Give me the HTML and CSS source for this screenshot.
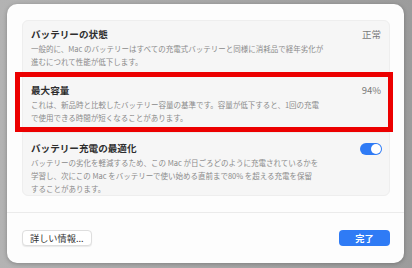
FILE: index.html
```html
<!DOCTYPE html>
<html lang="ja">
<head>
    <meta charset="UTF-8">
    <meta name="viewport" content="width=device-width, initial-scale=1.0">
    <title>バッテリー</title>
    <link rel="stylesheet" href="styles.css">
</head>
<body>
    <div class="backdrop">
        <div class="dialog">
            <div class="content">
                <div class="group">
                    <div class="row">
                        <div class="text">
                            <div class="title">バッテリーの状態</div>
                            <div class="desc">一般的に、Mac のバッテリーはすべての充電式バッテリーと同様に消耗品で経年劣化が<br>進むにつれて性能が低下します。</div>
                        </div>
                        <div class="value">正常</div>
                    </div>
                    <div class="row">
                        <div class="text">
                            <div class="title">最大容量</div>
                            <div class="desc">これは、新品時と比較したバッテリー容量の基準です。容量が低下すると、1回の充電<br>で使用できる時間が短くなることがあります。</div>
                        </div>
                        <div class="value">94%</div>
                    </div>
                    <div class="row row-last">
                        <div class="text">
                            <div class="title">バッテリー充電の最適化</div>
                            <div class="desc">バッテリーの劣化を軽減するため、この Mac が日ごろどのように充電されているかを<br>学習し、次にこの Mac をバッテリーで使い始める直前まで80% を超える充電を保留<br>することがあります。</div>
                        </div>
                        <div class="toggle"><span class="knob"></span></div>
                    </div>
                    <!-- annotation frame drawn over the second row -->
                    <div class="highlight"></div>
                </div>
            </div>
            <div class="footer">
                <button class="btn btn-plain">詳しい情報...</button>
                <button class="btn btn-primary">完了</button>
            </div>
        </div>
    </div>
</body>
</html>
```
FILE: styles.css
```css
body {
    margin: 0;
    padding: 0;
    font-family: "Noto Sans CJK JP", "Noto Sans", sans-serif;
    background: #a9a9a9;
}
.backdrop {
    width: 412px;
    height: 268px;
    padding: 4px 8px 5px 7px;
    box-sizing: border-box;
    background: linear-gradient(90deg, #b3b3b3 0%, #a6a6a6 60%, #9c9c9c 100%);
}
.dialog {
    width: 397px;
    height: 259px;
    background: #fdfdfd;
    border-radius: 10px;
    box-shadow: 0 1px 4px rgba(0, 0, 0, 0.25);
    display: flex;
    flex-direction: column;
}
.content {
    padding: 16px 14px 16px 15px;
    border-bottom: 1px solid #ebebeb;
}
.group {
    position: relative;
    background: #f6f6f6;
    border: 1px solid #eeeeee;
    border-radius: 6px;
}
.row {
    display: flex;
    align-items: flex-start;
    justify-content: space-between;
    padding: 6px 8px 8px 8px;
    border-bottom: 1px solid #ececec;
}
.row-last {
    border-bottom: none;
    padding-top: 8px;
    padding-bottom: 0;
}
.text {
    flex: 1;
    white-space: nowrap;
}
.title {
    font-size: 9.6px;
    line-height: 14px;
    font-weight: 600;
    color: #2e2e2e;
}
.desc {
    font-size: 7.5px;
    line-height: 13px;
    color: #8b8b8b;
    margin-top: 1px;
}
.value {
    font-size: 9.5px;
    line-height: 14px;
    color: #7a7a7a;
}
.toggle {
    width: 22px;
    height: 12px;
    margin-top: 2px;
    margin-right: -1px;
    border-radius: 6px;
    background: #2f7bf5;
    display: flex;
    justify-content: flex-end;
    align-items: center;
    padding: 1px;
    box-sizing: border-box;
}
.knob {
    width: 10px;
    height: 10px;
    border-radius: 50%;
    background: white;
}
.highlight {
    position: absolute;
    left: -8px;
    top: 51px;
    width: 378px;
    height: 60px;
    border: 5px solid #ec0000;
    box-sizing: border-box;
}
.footer {
    flex: 1;
    display: flex;
    justify-content: space-between;
    align-items: center;
    padding: 0 14px 0 15px;
}
.btn {
    height: 16px;
    padding: 0 7px;
    border-radius: 4px;
    font-family: "Noto Sans CJK JP", "Noto Sans", sans-serif;
    font-size: 9.2px;
    line-height: 16px;
    cursor: pointer;
}
.btn-plain {
    background: white;
    color: #333;
    border: 1px solid #dedede;
    box-shadow: 0 1px 1px rgba(0, 0, 0, 0.08);
    line-height: 14px;
}
.btn-primary {
    width: 51px;
    background: #2f7bf5;
    color: white;
    border: none;
    font-weight: 600;
}
```
